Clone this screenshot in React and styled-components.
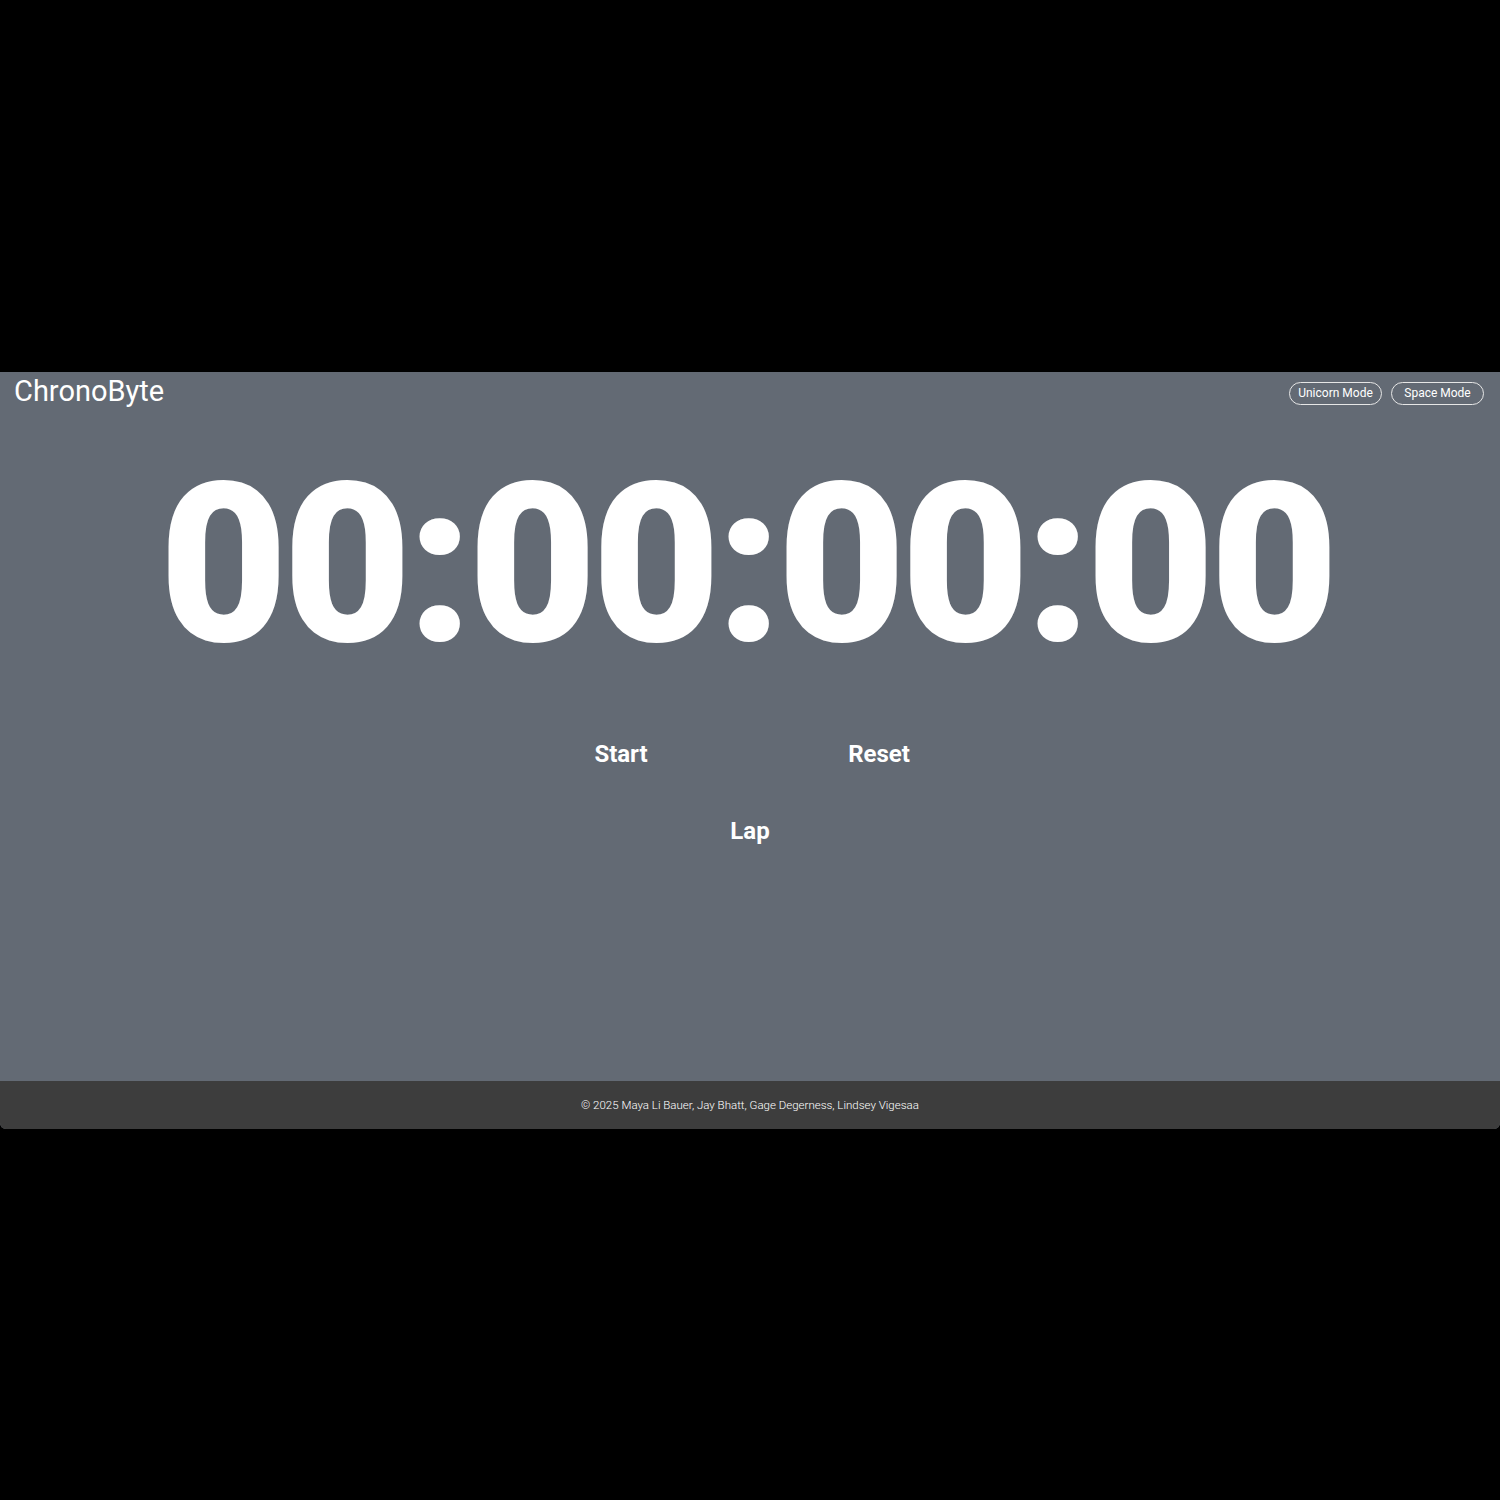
import React from "react";
import styled, { createGlobalStyle } from "styled-components";

const GlobalStyle = createGlobalStyle`
  html, body {
    margin: 0;
    padding: 0;
    background: #000;
  }
  body {
    font-family: Roboto, "Liberation Sans", sans-serif;
  }
`;

const Stage = styled.div`
  min-height: 100vh;
  display: flex;
  align-items: center;
`;

const Panel = styled.div`
  width: 100%;
  height: 757px;
  display: flex;
  flex-direction: column;
  background: #636a74;
  color: #fff;
  border-radius: 0 0 6px 6px;
  overflow: hidden;
`;

const Header = styled.header`
  display: flex;
  justify-content: space-between;
  align-items: flex-start;
  padding: 2px 16px 0 14px;
`;

const Logo = styled.h1`
  margin: 0;
  font-size: 29px;
  font-weight: 400;
`;

const ModeGroup = styled.div`
  display: flex;
  gap: 9px;
  padding-top: 8px;
`;

const ModeButton = styled.button`
  width: 93px;
  height: 23px;
  padding: 0;
  background: transparent;
  color: #fff;
  border: 1px solid #e6e6e6;
  border-radius: 999px;
  font-family: inherit;
  font-size: 12px;
  cursor: pointer;
`;

const Main = styled.main`
  flex: 1;
  display: flex;
  flex-direction: column;
  align-items: center;
`;

const Timer = styled.div`
  margin-top: 46px;
  padding-right: 7px;
  font-size: 222px;
  font-weight: 900;
  line-height: 1;
  letter-spacing: -5px;
`;

const Controls = styled.div`
  display: grid;
  grid-template-columns: 200px 200px;
  column-gap: 58px;
  row-gap: 49px;
  margin-top: 64px;
`;

const ControlButton = styled.button`
  grid-column: ${(p) => (p.wide ? "1 / span 2" : "auto")};
  justify-self: center;
  background: transparent;
  border: none;
  color: #fff;
  font-family: inherit;
  font-size: 24px;
  font-weight: 700;
  padding: 0;
  cursor: pointer;
`;

const Footer = styled.footer`
  height: 48px;
  display: flex;
  align-items: center;
  justify-content: center;
  background: #3d3d3d;
  color: #fff;
  font-size: 11.5px;
  font-weight: 300;
`;

export default function App() {
  return (
    <>
      <GlobalStyle />
      <Stage>
        <Panel>
          <Header>
            <Logo>ChronoByte</Logo>
            <ModeGroup>
              <ModeButton>Unicorn Mode</ModeButton>
              <ModeButton>Space Mode</ModeButton>
            </ModeGroup>
          </Header>
          <Main>
            <Timer>00:00:00:00</Timer>
            <Controls>
              <ControlButton>Start</ControlButton>
              <ControlButton>Reset</ControlButton>
              <ControlButton wide>Lap</ControlButton>
            </Controls>
          </Main>
          <Footer>© 2025 Maya Li Bauer, Jay Bhatt, Gage Degerness, Lindsey Vigesaa</Footer>
        </Panel>
      </Stage>
    </>
  );
}
